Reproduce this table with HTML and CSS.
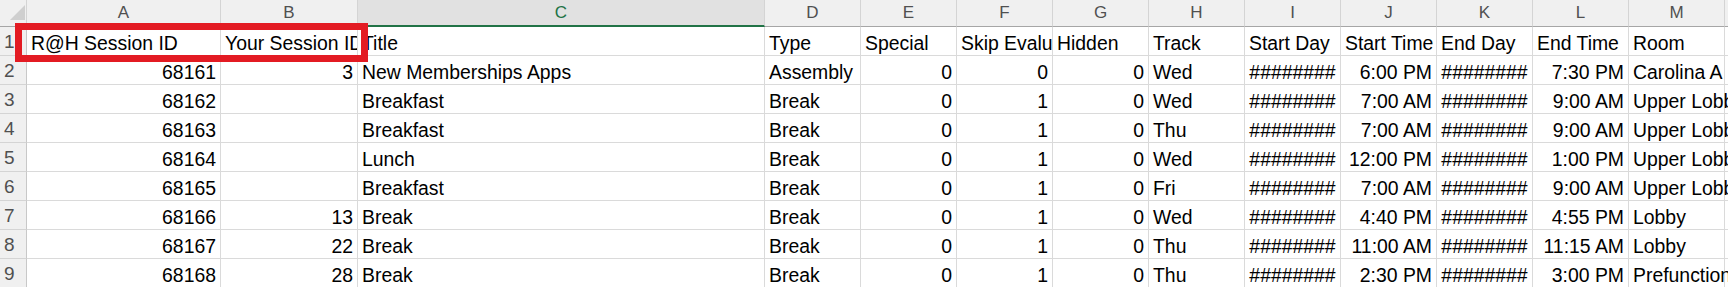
FILE: index.html
```html
<!DOCTYPE html>
<html lang="en">
<head>
<meta charset="utf-8">
<title>Sessions</title>
<link rel="stylesheet" href="styles.css">
</head>
<body>
<div class="workbook">
  <div class="sheet">
    <div class="corner"><span class="corner-mark"></span></div>
    <div class="col-head">A</div>
    <div class="col-head">B</div>
    <div class="col-head selected">C</div>
    <div class="col-head">D</div>
    <div class="col-head">E</div>
    <div class="col-head">F</div>
    <div class="col-head">G</div>
    <div class="col-head">H</div>
    <div class="col-head">I</div>
    <div class="col-head">J</div>
    <div class="col-head">K</div>
    <div class="col-head">L</div>
    <div class="col-head">M</div>
    <div class="col-head"></div>

    <div class="row-head">1</div>
    <div class="cell">R@H Session ID</div>
    <div class="cell">Your Session ID</div>
    <div class="cell">Title</div>
    <div class="cell">Type</div>
    <div class="cell">Special</div>
    <div class="cell">Skip Evaluation</div>
    <div class="cell">Hidden</div>
    <div class="cell">Track</div>
    <div class="cell">Start Day</div>
    <div class="cell">Start Time</div>
    <div class="cell">End Day</div>
    <div class="cell">End Time</div>
    <div class="cell spill">Room</div>
    <div class="cell"></div>

    <div class="row-head">2</div>
    <div class="cell num">68161</div>
    <div class="cell num">3</div>
    <div class="cell">New Memberships Apps</div>
    <div class="cell">Assembly</div>
    <div class="cell num">0</div>
    <div class="cell num">0</div>
    <div class="cell num">0</div>
    <div class="cell">Wed</div>
    <div class="cell fill">########</div>
    <div class="cell num">6:00 PM</div>
    <div class="cell fill">########</div>
    <div class="cell num">7:30 PM</div>
    <div class="cell spill">Carolina A</div>
    <div class="cell"></div>

    <div class="row-head">3</div>
    <div class="cell num">68162</div>
    <div class="cell num"></div>
    <div class="cell">Breakfast</div>
    <div class="cell">Break</div>
    <div class="cell num">0</div>
    <div class="cell num">1</div>
    <div class="cell num">0</div>
    <div class="cell">Wed</div>
    <div class="cell fill">########</div>
    <div class="cell num">7:00 AM</div>
    <div class="cell fill">########</div>
    <div class="cell num">9:00 AM</div>
    <div class="cell spill">Upper Lobby</div>
    <div class="cell"></div>

    <div class="row-head">4</div>
    <div class="cell num">68163</div>
    <div class="cell num"></div>
    <div class="cell">Breakfast</div>
    <div class="cell">Break</div>
    <div class="cell num">0</div>
    <div class="cell num">1</div>
    <div class="cell num">0</div>
    <div class="cell">Thu</div>
    <div class="cell fill">########</div>
    <div class="cell num">7:00 AM</div>
    <div class="cell fill">########</div>
    <div class="cell num">9:00 AM</div>
    <div class="cell spill">Upper Lobby</div>
    <div class="cell"></div>

    <div class="row-head">5</div>
    <div class="cell num">68164</div>
    <div class="cell num"></div>
    <div class="cell">Lunch</div>
    <div class="cell">Break</div>
    <div class="cell num">0</div>
    <div class="cell num">1</div>
    <div class="cell num">0</div>
    <div class="cell">Wed</div>
    <div class="cell fill">########</div>
    <div class="cell num">12:00 PM</div>
    <div class="cell fill">########</div>
    <div class="cell num">1:00 PM</div>
    <div class="cell spill">Upper Lobby</div>
    <div class="cell"></div>

    <div class="row-head">6</div>
    <div class="cell num">68165</div>
    <div class="cell num"></div>
    <div class="cell">Breakfast</div>
    <div class="cell">Break</div>
    <div class="cell num">0</div>
    <div class="cell num">1</div>
    <div class="cell num">0</div>
    <div class="cell">Fri</div>
    <div class="cell fill">########</div>
    <div class="cell num">7:00 AM</div>
    <div class="cell fill">########</div>
    <div class="cell num">9:00 AM</div>
    <div class="cell spill">Upper Lobby</div>
    <div class="cell"></div>

    <div class="row-head">7</div>
    <div class="cell num">68166</div>
    <div class="cell num">13</div>
    <div class="cell">Break</div>
    <div class="cell">Break</div>
    <div class="cell num">0</div>
    <div class="cell num">1</div>
    <div class="cell num">0</div>
    <div class="cell">Wed</div>
    <div class="cell fill">########</div>
    <div class="cell num">4:40 PM</div>
    <div class="cell fill">########</div>
    <div class="cell num">4:55 PM</div>
    <div class="cell spill">Lobby</div>
    <div class="cell"></div>

    <div class="row-head">8</div>
    <div class="cell num">68167</div>
    <div class="cell num">22</div>
    <div class="cell">Break</div>
    <div class="cell">Break</div>
    <div class="cell num">0</div>
    <div class="cell num">1</div>
    <div class="cell num">0</div>
    <div class="cell">Thu</div>
    <div class="cell fill">########</div>
    <div class="cell num">11:00 AM</div>
    <div class="cell fill">########</div>
    <div class="cell num">11:15 AM</div>
    <div class="cell spill">Lobby</div>
    <div class="cell"></div>

    <div class="row-head">9</div>
    <div class="cell num">68168</div>
    <div class="cell num">28</div>
    <div class="cell">Break</div>
    <div class="cell">Break</div>
    <div class="cell num">0</div>
    <div class="cell num">1</div>
    <div class="cell num">0</div>
    <div class="cell">Thu</div>
    <div class="cell fill">########</div>
    <div class="cell num">2:30 PM</div>
    <div class="cell fill">########</div>
    <div class="cell num">3:00 PM</div>
    <div class="cell spill">Prefunction</div>
    <div class="cell"></div>
  </div>
  <div class="callout"></div>
</div>
</body>
</html>
```

FILE: styles.css
```css
html, body {
  margin: 0;
  padding: 0;
  background: #ffffff;
  overflow: hidden;
}

.workbook {
  position: relative;
  width: 1728px;
  height: 287px;
  overflow: hidden;
  font-family: "Liberation Sans", Arial, sans-serif;
}

/* spreadsheet grid: row header, columns A..M, then a sliver of N */
.sheet {
  display: grid;
  grid-template-columns: 27px 194px 137px 407px repeat(10, 96px) 1fr;
  grid-template-rows: 27px repeat(9, 29px);
}

.corner {
  position: relative;
  background: #f0f0f0;
  border-right: 1px solid #d4d4d4;
  border-bottom: 1px solid #a6a6a6;
  box-sizing: border-box;
}

.corner-mark {
  position: absolute;
  right: 1px;
  bottom: 6px;
  width: 0;
  height: 0;
  border-left: 15px solid transparent;
  border-bottom: 15px solid #cfcfcf;
}

.col-head {
  background: #f0f0f0;
  border-right: 1px solid #d4d4d4;
  border-bottom: 1px solid #a6a6a6;
  box-sizing: border-box;
  color: #505050;
  font-size: 17px;
  line-height: 26px;
  text-align: center;
}

.col-head.selected {
  background: #e1e1e1;
  color: #217346;
  border-bottom: 2px solid #217346;
}

.row-head {
  background: #f0f0f0;
  border-right: 1px solid #c8c8c8;
  border-bottom: 1px solid #d4d4d4;
  box-sizing: border-box;
  color: #505050;
  font-size: 19px;
  line-height: 28px;
  padding: 1px 0 0 4px;
}

.cell {
  border-right: 1px solid #dadada;
  border-bottom: 1px solid #dadada;
  box-sizing: border-box;
  color: #000000;
  font-size: 19.4px;
  line-height: 28px;
  padding: 2px 4px 0 4px;
  white-space: nowrap;
  overflow: hidden;
}

.cell.num {
  text-align: right;
}

.cell.fill {
  text-align: center;
  padding: 2px 0 0 0;
}

/* text in the last column runs on into the empty column beside it */
.cell.spill {
  overflow: visible;
}

/* red highlight around the two ID headings */
.callout {
  position: absolute;
  left: 15px;
  top: 23px;
  width: 353px;
  height: 39px;
  border: 7px solid #e31b23;
  box-sizing: border-box;
}
```
